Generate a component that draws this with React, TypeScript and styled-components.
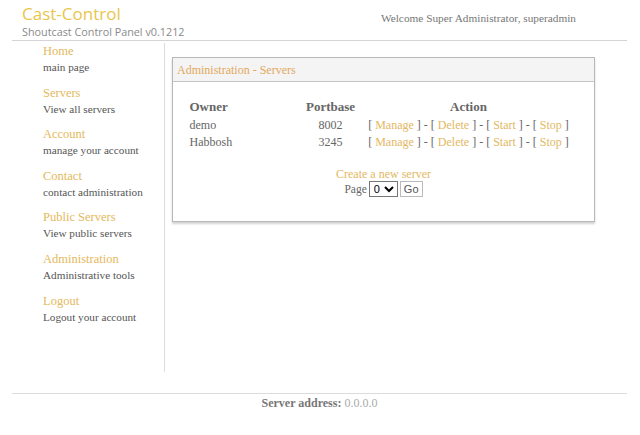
import styled, { createGlobalStyle } from "styled-components";

const GlobalStyle = createGlobalStyle`
  body {
    margin: 0;
    background: #ffffff;
    font-family: "Liberation Serif", "Times New Roman", serif;
    color: #555;
  }
`;

const menu = [
  { title: "Home", desc: "main page" },
  { title: "Servers", desc: "View all servers" },
  { title: "Account", desc: "manage your account" },
  { title: "Contact", desc: "contact administration" },
  { title: "Public Servers", desc: "View public servers" },
  { title: "Administration", desc: "Administrative tools" },
  { title: "Logout", desc: "Logout your account" },
];

const servers = [
  { owner: "demo", port: 8002 },
  { owner: "Habbosh", port: 3245 },
];

const actions = ["Manage", "Delete", "Start", "Stop"];

export default function App() {
  return (
    <>
      <GlobalStyle />
      <Page>
        <Header>
          <Brand>
            <Title>Cast-Control</Title>
            <Subtitle>Shoutcast Control Panel v0.1212</Subtitle>
          </Brand>
          <Welcome>Welcome Super Administrator, superadmin</Welcome>
        </Header>
        <Body>
          <Sidebar>
            {menu.map((m) => (
              <MenuItem key={m.title}>
                <MenuLink href="#">{m.title}</MenuLink>
                <MenuDesc>{m.desc}</MenuDesc>
              </MenuItem>
            ))}
          </Sidebar>
          <Content>
            <Panel>
              <PanelHead>Administration - Servers</PanelHead>
              <PanelBody>
                <Table>
                  <thead>
                    <tr>
                      <Th $w={112} $align="left">Owner</Th>
                      <Th $w={58} $align="center">Portbase</Th>
                      <Th $align="center">Action</Th>
                    </tr>
                  </thead>
                  <tbody>
                    {servers.map((s) => (
                      <tr key={s.owner}>
                        <Td $align="left">{s.owner}</Td>
                        <Td $align="center">{s.port}</Td>
                        <Td $align="center">
                          {actions.map((a, i) => (
                            <span key={a}>
                              [ <ActionLink href="#">{a}</ActionLink> ]
                              {i < actions.length - 1 ? " - " : ""}
                            </span>
                          ))}
                        </Td>
                      </tr>
                    ))}
                  </tbody>
                </Table>
                <CreateLink href="#">Create a new server</CreateLink>
                <Pager>
                  Page
                  <Select defaultValue="0">
                    <option value="0">0</option>
                  </Select>
                  <GoButton>Go</GoButton>
                </Pager>
              </PanelBody>
            </Panel>
          </Content>
        </Body>
        <Footer>
          <b>Server address:</b> <Addr>0.0.0.0</Addr>
        </Footer>
      </Page>
    </>
  );
}

const Page = styled.div`
  margin: 0 13px 0 12px;
`;

const Header = styled.div`
  display: flex;
  justify-content: space-between;
  align-items: flex-start;
  height: 40px;
  border-bottom: 1px solid #d4d4d4;
  padding-left: 10px;
`;

const Brand = styled.div`
  display: flex;
  flex-direction: column;
  padding-top: 3px;
`;

const Title = styled.div`
  font-family: "Open Sans", "DejaVu Sans", sans-serif;
  font-size: 17px;
  line-height: 21px;
  color: #e9c64c;
`;

const Subtitle = styled.div`
  font-family: "Open Sans", "DejaVu Sans", sans-serif;
  font-size: 10.8px;
  line-height: 15px;
  color: #8a8a8a;
`;

const Welcome = styled.div`
  font-size: 11.3px;
  color: #777;
  padding: 12px 51px 0 0;
`;

const Body = styled.div`
  display: flex;
  align-items: flex-start;
  padding-top: 2px;
  height: 350px;
`;

const Sidebar = styled.div`
  width: 121px;
  padding: 0 0 0 31px;
  height: 329px;
  border-right: 1px solid #dcdcdc;
  display: flex;
  flex-direction: column;
  gap: 9.6px;
`;

const MenuItem = styled.div`
  display: flex;
  flex-direction: column;
`;

const MenuLink = styled.a`
  font-size: 12.5px;
  line-height: 16px;
  color: #e4b95c;
  text-decoration: none;
`;

const MenuDesc = styled.div`
  font-size: 11.2px;
  line-height: 16px;
  color: #555;
`;

const Content = styled.div`
  flex: 1;
  padding: 14px 0 0 7px;
`;

const Panel = styled.div`
  width: 421px;
  border: 1px solid #b8b8b8;
  box-shadow: 0 2px 2px rgba(0, 0, 0, 0.18);
  background: #fff;
`;

const PanelHead = styled.div`
  height: 23px;
  line-height: 24px;
  background: #f4f4f4;
  border-bottom: 1px solid #c4c4c4;
  padding-left: 4px;
  font-size: 12px;
  color: #e3a85c;
`;

const PanelBody = styled.div`
  display: flex;
  flex-direction: column;
  align-items: center;
  padding: 15px 16px 24px;
`;

const Table = styled.table`
  width: 388px;
  border-collapse: collapse;
  margin-bottom: 16px;
`;

const Th = styled.th<{ $w?: number; $align: string }>`
  width: ${({ $w }) => ($w ? `${$w}px` : "auto")};
  text-align: ${({ $align }) => $align};
  font-size: 13px;
  line-height: 20px;
  color: #666;
  font-weight: bold;
  padding: 0;
`;

const Td = styled.td<{ $align: string }>`
  text-align: ${({ $align }) => $align};
  font-size: 12px;
  line-height: 17px;
  color: #666;
  padding: 0;
  white-space: nowrap;
`;

const ActionLink = styled.a`
  color: #e3b863;
  text-decoration: none;
`;

const CreateLink = styled.a`
  font-size: 12px;
  line-height: 14px;
  color: #e3b863;
  text-decoration: none;
`;

const Pager = styled.div`
  display: flex;
  align-items: center;
  gap: 2px;
  font-size: 11.5px;
  color: #666;
`;

const Select = styled.select`
  font-family: "Liberation Sans", Arial, sans-serif;
  font-size: 11px;
  height: 16px;
  padding: 0;
  border: 1px solid #777;
  background: #fff;
`;

const GoButton = styled.button`
  font-family: "Liberation Sans", Arial, sans-serif;
  font-size: 11px;
  height: 16px;
  padding: 0 3px;
  border: 1px solid #bbb;
  background: #fff;
  color: #555;
`;

const Footer = styled.div`
  border-top: 1px solid #dcdcdc;
  text-align: center;
  font-size: 12px;
  line-height: 16px;
  padding-top: 1px;
  color: #777;
`;

const Addr = styled.span`
  color: #aaa;
`;
